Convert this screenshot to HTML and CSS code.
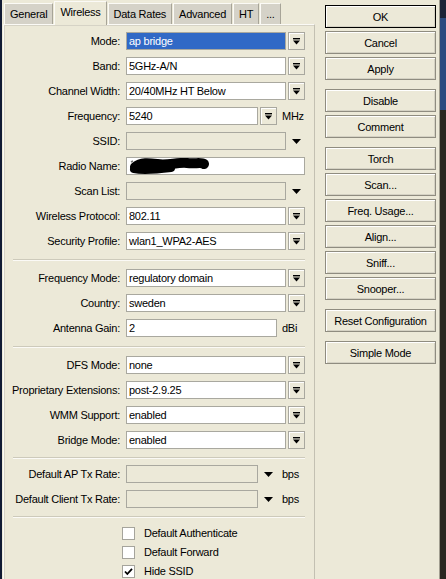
FILE: index.html
```html
<!DOCTYPE html>
<html>
<head>
<meta charset="utf-8">
<link rel="stylesheet" href="styles.css">
</head>
<body>
<div class="screen">
  <div class="edge-left"></div>
  <div class="window">
    <div class="main">
      <div class="tabs">
        <div class="tab">General</div>
        <div class="tab active">Wireless</div>
        <div class="tab">Data Rates</div>
        <div class="tab">Advanced</div>
        <div class="tab">HT</div>
        <div class="tab">...</div>
      </div>
      <div class="panel">
        <div class="group">
          <div class="row"><span class="label">Mode:</span><div class="field"><div class="input w160 selected">ap bridge</div><div class="dd"><svg width="7" height="7" viewBox="0 0 7 7"><rect x="0" y="0" width="7" height="1.4" fill="#000"/><polygon points="0,2.6 7,2.6 3.5,6.6" fill="#000"/></svg></div></div></div>
          <div class="row"><span class="label">Band:</span><div class="field"><div class="input w160">5GHz-A/N</div><div class="dd"><svg width="7" height="7" viewBox="0 0 7 7"><rect x="0" y="0" width="7" height="1.4" fill="#000"/><polygon points="0,2.6 7,2.6 3.5,6.6" fill="#000"/></svg></div></div></div>
          <div class="row"><span class="label">Channel Width:</span><div class="field"><div class="input w160">20/40MHz HT Below</div><div class="dd"><svg width="7" height="7" viewBox="0 0 7 7"><rect x="0" y="0" width="7" height="1.4" fill="#000"/><polygon points="0,2.6 7,2.6 3.5,6.6" fill="#000"/></svg></div></div></div>
          <div class="row"><span class="label">Frequency:</span><div class="field"><div class="input w132">5240</div><div class="dd"><svg width="7" height="7" viewBox="0 0 7 7"><rect x="0" y="0" width="7" height="1.4" fill="#000"/><polygon points="0,2.6 7,2.6 3.5,6.6" fill="#000"/></svg></div><span class="unit">MHz</span></div></div>
          <div class="row"><span class="label">SSID:</span><div class="field"><div class="input w160 disabled"></div><div class="tri"><svg width="9" height="5" viewBox="0 0 9 5"><polygon points="0,0 9,0 4.5,5" fill="#000"/></svg></div></div></div>
          <div class="row"><span class="label">Radio Name:</span><div class="field"><div class="input wfull"><svg class="blot" width="80" height="16" viewBox="0 0 80 16"><path d="M6 9 C12 4,20 5,28 6 C38 8,48 4,58 5 C66 6,72 4,75 6" stroke="#000" stroke-width="10" fill="none" stroke-linecap="round"/><path d="M5 11 C14 13,26 12,42 10" stroke="#000" stroke-width="8" fill="none" stroke-linecap="round"/><path d="M2 4 L4 3" stroke="#777" stroke-width="1.5" fill="none"/></svg></div></div></div>
          <div class="row"><span class="label">Scan List:</span><div class="field"><div class="input w160 disabled"></div><div class="tri"><svg width="9" height="5" viewBox="0 0 9 5"><polygon points="0,0 9,0 4.5,5" fill="#000"/></svg></div></div></div>
          <div class="row"><span class="label">Wireless Protocol:</span><div class="field"><div class="input w160">802.11</div><div class="dd"><svg width="7" height="7" viewBox="0 0 7 7"><rect x="0" y="0" width="7" height="1.4" fill="#000"/><polygon points="0,2.6 7,2.6 3.5,6.6" fill="#000"/></svg></div></div></div>
          <div class="row"><span class="label">Security Profile:</span><div class="field"><div class="input w160">wlan1_WPA2-AES</div><div class="dd"><svg width="7" height="7" viewBox="0 0 7 7"><rect x="0" y="0" width="7" height="1.4" fill="#000"/><polygon points="0,2.6 7,2.6 3.5,6.6" fill="#000"/></svg></div></div></div>
        </div>
        <div class="sep"></div>
        <div class="group">
          <div class="row"><span class="label">Frequency Mode:</span><div class="field"><div class="input w160">regulatory domain</div><div class="dd"><svg width="7" height="7" viewBox="0 0 7 7"><rect x="0" y="0" width="7" height="1.4" fill="#000"/><polygon points="0,2.6 7,2.6 3.5,6.6" fill="#000"/></svg></div></div></div>
          <div class="row"><span class="label">Country:</span><div class="field"><div class="input w160">sweden</div><div class="dd"><svg width="7" height="7" viewBox="0 0 7 7"><rect x="0" y="0" width="7" height="1.4" fill="#000"/><polygon points="0,2.6 7,2.6 3.5,6.6" fill="#000"/></svg></div></div></div>
          <div class="row"><span class="label">Antenna Gain:</span><div class="field"><div class="input w151">2</div><span class="unit">dBi</span></div></div>
        </div>
        <div class="sep"></div>
        <div class="group">
          <div class="row"><span class="label">DFS Mode:</span><div class="field"><div class="input w160">none</div><div class="dd"><svg width="7" height="7" viewBox="0 0 7 7"><rect x="0" y="0" width="7" height="1.4" fill="#000"/><polygon points="0,2.6 7,2.6 3.5,6.6" fill="#000"/></svg></div></div></div>
          <div class="row"><span class="label">Proprietary Extensions:</span><div class="field"><div class="input w160">post-2.9.25</div><div class="dd"><svg width="7" height="7" viewBox="0 0 7 7"><rect x="0" y="0" width="7" height="1.4" fill="#000"/><polygon points="0,2.6 7,2.6 3.5,6.6" fill="#000"/></svg></div></div></div>
          <div class="row"><span class="label">WMM Support:</span><div class="field"><div class="input w160">enabled</div><div class="dd"><svg width="7" height="7" viewBox="0 0 7 7"><rect x="0" y="0" width="7" height="1.4" fill="#000"/><polygon points="0,2.6 7,2.6 3.5,6.6" fill="#000"/></svg></div></div></div>
          <div class="row"><span class="label">Bridge Mode:</span><div class="field"><div class="input w160">enabled</div><div class="dd"><svg width="7" height="7" viewBox="0 0 7 7"><rect x="0" y="0" width="7" height="1.4" fill="#000"/><polygon points="0,2.6 7,2.6 3.5,6.6" fill="#000"/></svg></div></div></div>
        </div>
        <div class="sep short"></div>
        <div class="group">
          <div class="row"><span class="label">Default AP Tx Rate:</span><div class="field"><div class="input w132 disabled"></div><div class="tri"><svg width="9" height="5" viewBox="0 0 9 5"><polygon points="0,0 9,0 4.5,5" fill="#000"/></svg></div><span class="unit">bps</span></div></div>
          <div class="row"><span class="label">Default Client Tx Rate:</span><div class="field"><div class="input w132 disabled"></div><div class="tri"><svg width="9" height="5" viewBox="0 0 9 5"><polygon points="0,0 9,0 4.5,5" fill="#000"/></svg></div><span class="unit">bps</span></div></div>
        </div>
        <div class="sep tight"></div>
        <div class="checks">
          <div class="check"><span class="box"></span><span>Default Authenticate</span></div>
          <div class="check"><span class="box"></span><span>Default Forward</span></div>
          <div class="check"><span class="box"><svg width="11" height="11" viewBox="0 0 11 11"><path d="M2 5.5 L4.3 8 L9 2.8" stroke="#000" stroke-width="1.8" fill="none"/></svg></span><span>Hide SSID</span></div>
        </div>
      </div>
    </div>
    <div class="buttons">
      <div class="btn-group">
        <div class="btn default">OK</div>
        <div class="btn">Cancel</div>
        <div class="btn">Apply</div>
      </div>
      <div class="btn-group">
        <div class="btn">Disable</div>
        <div class="btn">Comment</div>
      </div>
      <div class="btn-group">
        <div class="btn">Torch</div>
        <div class="btn">Scan...</div>
        <div class="btn">Freq. Usage...</div>
        <div class="btn">Align...</div>
        <div class="btn">Sniff...</div>
        <div class="btn">Snooper...</div>
      </div>
      <div class="btn-group">
        <div class="btn">Reset Configuration</div>
      </div>
      <div class="btn-group">
        <div class="btn">Simple Mode</div>
      </div>
    </div>
  </div>
  <div class="edge-right"></div>
</div>
</body>
</html>
```

FILE: styles.css
```css
html, body {
  margin: 0;
  padding: 0;
  overflow: hidden;
}
body {
  background: #23252c;
  font-family: "Liberation Sans", Arial, sans-serif;
  font-size: 11px;
  letter-spacing: -0.25px;
  color: #000;
}
.screen {
  display: flex;
  width: 446px;
  height: 579px;
}
.edge-left {
  width: 2px;
  background: #101a34;
}
.window {
  width: 438px;
  box-sizing: border-box;
  background: #ece9d8;
  border-right: 1px solid #a19e90;
  display: flex;
}
.edge-right {
  flex: 1;
  background: linear-gradient(#1b2338 0, #1b2338 18px, #2b4a80 18px, #2b4a80 110px, #2a2620 110px);
}
.main {
  width: 312px;
  margin-left: 1px;
  padding-top: 1px;
  display: flex;
  flex-direction: column;
}
.tabs {
  display: flex;
  align-items: flex-end;
  height: 23px;
  padding-left: 1px;
}
.tab {
  height: 21px;
  box-sizing: border-box;
  padding: 0 5px;
  margin-right: 1px;
  background: #d5d2c8;
  border: 1px solid #fbfaf6;
  border-bottom: none;
  border-right-color: #a7a498;
  display: flex;
  align-items: center;
  white-space: nowrap;
}
.tab.active {
  height: 24px;
  margin-bottom: -1px;
  background: #ece9d8;
  position: relative;
  z-index: 1;
  padding-bottom: 3px;
}
.panel {
  flex: 1;
  border: 1px solid #c3c0b2;
  border-bottom: none;
  border-top-color: #fbfaf6;
  border-left-color: #fbfaf6;
  box-shadow: inset 1px 1px 0 #d6d3c6;
  padding-top: 7px;
}
.group {
  display: flex;
  flex-direction: column;
  gap: 7px;
}
.row {
  display: grid;
  grid-template-columns: 116px 179px;
  column-gap: 6px;
  height: 18px;
  align-items: center;
}
.label {
  text-align: right;
  white-space: nowrap;
}
.field {
  display: flex;
  align-items: center;
  gap: 2px;
  height: 18px;
}
.input {
  height: 18px;
  box-sizing: border-box;
  border: 1px solid #a9a89f;
  background: #fff;
  padding-left: 2px;
  display: flex;
  align-items: center;
  white-space: nowrap;
  overflow: hidden;
}
.input.selected {
  background: #3169c6;
  color: #fff;
}
.input.disabled {
  background: #ece9d8;
}
.w160 { width: 160px; }
.w132 { width: 132px; }
.w151 { width: 151px; }
.wfull { width: 179px; }
.blot {
  display: block;
}
.dd {
  width: 17px;
  height: 18px;
  box-sizing: border-box;
  border: 1px solid #a9a89f;
  background: #ece9d8;
  box-shadow: inset 1px 1px 0 #fff;
  display: flex;
  align-items: center;
  justify-content: center;
}
.tri {
  width: 17px;
  height: 18px;
  display: flex;
  align-items: center;
  justify-content: center;
}
.unit {
  margin-left: 3px;
  white-space: nowrap;
}
.sep {
  height: 0;
  border-top: 1px solid #cdcabb;
  border-bottom: 1px solid #fbfaf6;
  margin: 9px 9px 8px 9px;
}
.sep.short {
  margin-top: 8px;
  margin-bottom: 6px;
}
.sep.tight {
  margin-top: 8px;
  margin-bottom: 6px;
}
.checks {
  display: flex;
  flex-direction: column;
  gap: 1px;
}
.check {
  display: flex;
  align-items: center;
  height: 18px;
  padding-left: 118px;
  gap: 9px;
}
.box {
  width: 13px;
  height: 13px;
  box-sizing: border-box;
  border: 1px solid #a5a49c;
  background: #fff;
  display: flex;
  align-items: center;
  justify-content: center;
}
.buttons {
  width: 111px;
  margin-left: 10px;
  padding-top: 5px;
}
.btn-group {
  display: flex;
  flex-direction: column;
  gap: 3px;
  margin-bottom: 9px;
}
.btn {
  height: 23px;
  box-sizing: border-box;
  border: 1px solid #8f8c80;
  background: #ece9d8;
  box-shadow: inset 1px 1px 0 #fff, inset -1px -1px 0 #d5d2c4;
  display: flex;
  align-items: center;
  justify-content: center;
  white-space: nowrap;
}
.btn.default {
  border-color: #000;
}
```
